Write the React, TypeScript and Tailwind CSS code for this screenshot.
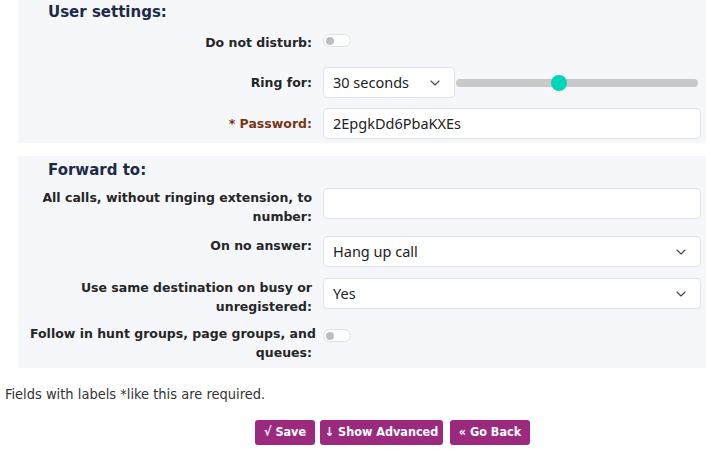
import { ChevronDown } from "lucide-react"

const labelCls =
  "w-[282px] shrink-0 whitespace-nowrap text-right font-bold text-[12.5px] leading-[19px] text-[#262626] [font-family:'DejaVu_Sans',sans-serif]"
const fieldCls =
  "h-[31px] rounded-[4px] border border-[#dfe2e7] bg-white px-[9px] text-[14.5px] text-[#222] [font-family:'Noto_Sans',sans-serif] flex items-center"

function Toggle() {
  return (
    <div className="mt-[1px] flex h-[13px] w-[28px] items-center rounded-full border border-[#dcdfe4] bg-white px-[2px]">
      <div className="h-[8px] w-[8px] rounded-full bg-[#bdbdbd]" />
    </div>
  )
}

function Select({ value, className = "" }: { value: string; className?: string }) {
  return (
    <div className={`${fieldCls} justify-between ${className}`}>
      <span>{value}</span>
      <ChevronDown className="mr-[2px] h-[16px] w-[16px] text-[#444]" strokeWidth={1.6} />
    </div>
  )
}

function Row({ label, children, top = false, labelClass = "" }: { label: React.ReactNode; children: React.ReactNode; top?: boolean; labelClass?: string }) {
  return (
    <div className={`flex gap-x-[11px] ${top ? "items-start" : "items-center"}`}>
      <div className={`${labelCls} ${labelClass}`}>{label}</div>
      <div className="w-[378px]">{children}</div>
    </div>
  )
}

function Heading({ text }: { text: string }) {
  return (
    <div className="flex h-[24px] items-center pl-[30px] text-[15px] font-bold text-[#1d2b49] [font-family:'DejaVu_Sans',sans-serif]">
      {text}
    </div>
  )
}

export default function App() {
  return (
    <div className="h-[449px] w-[706px] overflow-hidden bg-white">
      {/* User settings */}
      <section className="ml-[18px] bg-[#f5f7fb] pb-[4px] pl-[12px]">
        <div className="-ml-[12px]">
          <Heading text="User settings:" />
        </div>
        <div className="mt-[9px] flex flex-col">
          <Row label="Do not disturb:" top>
            <Toggle />
          </Row>
          <div className="mt-[15px]">
            <Row label="Ring for:">
              <div className="flex items-center">
                <Select value="30 seconds" className="w-[132px]" />
                <div className="relative ml-[1px] mr-[3px] flex h-[16px] flex-1 items-center">
                  <div className="h-[8px] w-full rounded-full bg-[#c9c9c9]" />
                  <div className="absolute left-[95px] h-[16px] w-[16px] rounded-full bg-[#00d5b9]" />
                </div>
              </div>
            </Row>
          </div>
          <div className="mt-[10px]">
            <Row label="* Password:" labelClass="!text-[#7a3516]">
              <div className={fieldCls}>2EpgkDd6PbaKXEs</div>
            </Row>
          </div>
        </div>
      </section>

      {/* Forward to */}
      <section className="ml-[18px] mt-[13px] bg-[#f5f7fb] pb-[6px] pl-[12px] pt-[2px]">
        <div className="-ml-[12px]">
          <Heading text="Forward to:" />
        </div>
        <div className="mt-[6px] flex flex-col">
          <Row label={<>All calls, without ringing extension, to<br />number:</>} top>
            <div className={`${fieldCls} h-[30px]`} />
          </Row>
          <div className="mt-[10px]">
            <Row label="On no answer:" top>
              <Select value="Hang up call" />
            </Row>
          </div>
          <div className="mt-[11px]">
            <Row label={<>Use same destination on busy or<br />unregistered:</>} top>
              <Select value="Yes" />
            </Row>
          </div>
          <div className="mt-[8px]">
            <Row label={<>Follow in hunt groups, page groups, and<br />queues:</>} top>
              <div className="pt-[4px]">
                <Toggle />
              </div>
            </Row>
          </div>
        </div>
      </section>

      <p className="ml-[5px] mt-[17px] text-[14.5px] leading-[18px] text-[#333] [font-family:'DejaVu_Sans_Condensed','DejaVu_Sans',sans-serif]">
        Fields with labels *like this are required.
      </p>

      <div className="mt-[17px] flex gap-[5px] pl-[255px] text-[12.5px] font-bold text-white [font-family:'DejaVu_Sans_Condensed','DejaVu_Sans',sans-serif]">
        <button className="h-[25px] w-[60px] rounded-[3px] bg-[#9b2a7f]">√ Save</button>
        <button className="h-[25px] w-[123px] rounded-[3px] bg-[#9b2a7f]">↓ Show Advanced</button>
        <button className="ml-[2px] h-[25px] w-[80px] rounded-[3px] bg-[#9b2a7f]">« Go Back</button>
      </div>
    </div>
  )
}
